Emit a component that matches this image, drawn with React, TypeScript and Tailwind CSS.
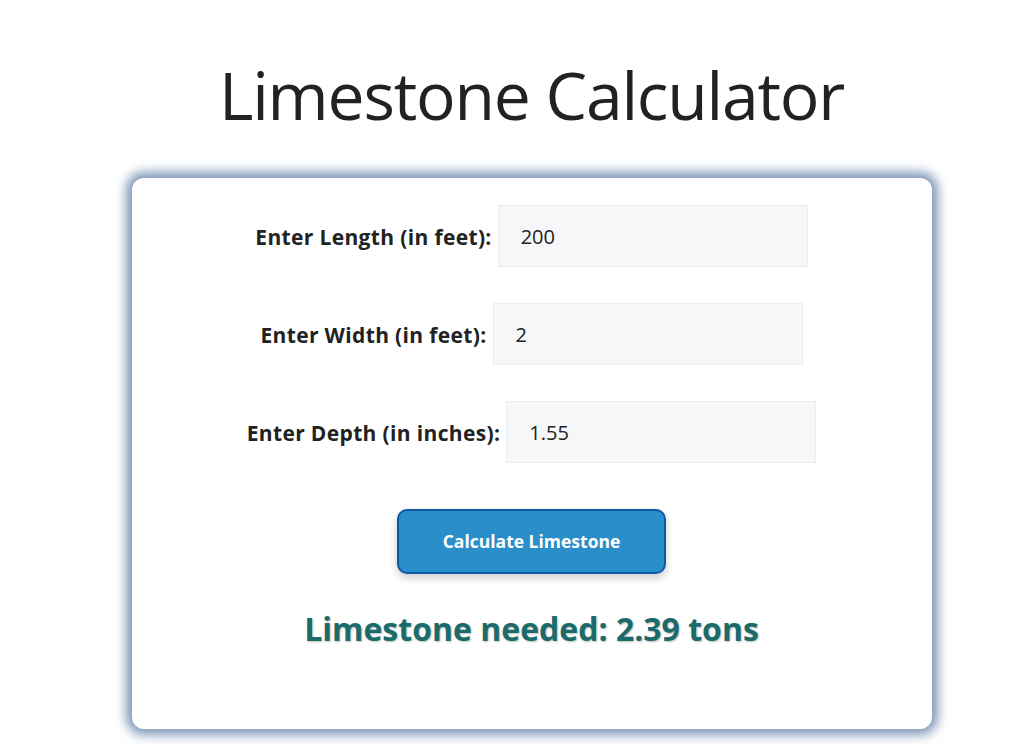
import { useState } from "react";

const Field = ({
  label,
  value,
  onChange,
}: {
  label: string;
  value: string;
  onChange: (v: string) => void;
}) => (
  <div className="flex items-center justify-center gap-[6px]">
    <label className="pt-[3px] text-[21px] font-bold text-[#222] tracking-[0.35px]">{label}</label>
    <input
      type="text"
      value={value}
      onChange={(e) => onChange(e.target.value)}
      className="w-[310px] h-[62px] px-[22px] bg-[#f6f7f9] border border-[#ebedf0] text-[20px] text-[#222] outline-none"
    />
  </div>
);

export default function App() {
  const [length, setLength] = useState("200");
  const [width, setWidth] = useState("2");
  const [depth, setDepth] = useState("1.55");
  const [result, setResult] = useState("2.39");

  const calculate = () => {
    const cubicFeet =
      parseFloat(length) * parseFloat(width) * (parseFloat(depth) / 12);
    const tons = (cubicFeet / 27) * 1.24;
    setResult(isNaN(tons) ? "0" : tons.toFixed(2));
  };

  return (
    <div
      className="min-h-screen bg-white flex flex-col items-center pl-[28px]"
      style={{ fontFamily: '"Open Sans", "Noto Sans", sans-serif' }}
    >
      <h1 className="mt-[61px] text-[66px] leading-none font-normal text-[#222] tracking-[-1.2px]">
        Limestone Calculator
      </h1>
      <div className="mt-[51px] w-[800px] h-[551px] bg-white rounded-[12px] shadow-[0_0_11px_6px_#7f98b8] flex flex-col items-center pt-[27px]">
        <div className="flex flex-col gap-[36px]">
          <Field label="Enter Length (in feet):" value={length} onChange={setLength} />
          <Field label="Enter Width (in feet):" value={width} onChange={setWidth} />
          <Field label="Enter Depth (in inches):" value={depth} onChange={setDepth} />
        </div>
        <button
          onClick={calculate}
          className="mt-[46px] w-[269px] h-[65px] bg-[#2a8ec9] border-2 border-[#0f58a8] rounded-[10px] text-white text-[17.5px] font-bold shadow-[0_4px_8px_rgba(0,0,0,0.2)]"
        >
          Calculate Limestone
        </button>
        <p className="mt-[31px] text-[32px] font-bold text-[#1b6b6b] [text-shadow:1px_1px_2px_rgba(0,0,0,0.25)]">
          Limestone needed: {result} tons
        </p>
      </div>
    </div>
  );
}
